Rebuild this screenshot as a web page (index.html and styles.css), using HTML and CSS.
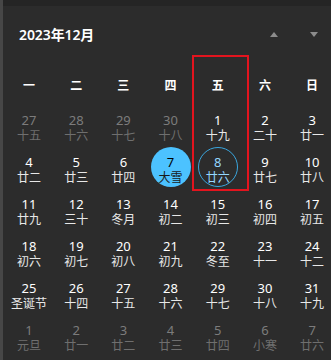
FILE: index.html
```html
<!DOCTYPE html>
<html lang="zh-CN">
<head>
<meta charset="utf-8">
<title>日历</title>
<link rel="stylesheet" href="styles.css">
</head>
<body>
<div class="frame">
  <div class="topband"></div>
  <div class="header">
    <div class="title">2023年12月</div>
    <div class="nav">
      <svg class="arrow" width="8" height="5" viewBox="0 0 8 5"><polygon points="4,0 8,5 0,5"/></svg>
      <svg class="arrow" width="8" height="5" viewBox="0 0 8 5"><polygon points="0,0 8,0 4,5"/></svg>
    </div>
  </div>
  <div class="grid weekdays">
    <div class="wd">一</div><div class="wd">二</div><div class="wd">三</div><div class="wd">四</div><div class="wd">五</div><div class="wd">六</div><div class="wd">日</div>
  </div>
  <div class="grid days">
    <div class="cell"><div class="day other"><span class="num">27</span><span class="lunar">十五</span></div></div>
    <div class="cell"><div class="day other"><span class="num">28</span><span class="lunar">十六</span></div></div>
    <div class="cell"><div class="day other"><span class="num">29</span><span class="lunar">十七</span></div></div>
    <div class="cell"><div class="day other"><span class="num">30</span><span class="lunar">十八</span></div></div>
    <div class="cell"><div class="day"><span class="num">1</span><span class="lunar">十九</span></div></div>
    <div class="cell"><div class="day"><span class="num">2</span><span class="lunar">二十</span></div></div>
    <div class="cell"><div class="day"><span class="num">3</span><span class="lunar">廿一</span></div></div>

    <div class="cell"><div class="day"><span class="num">4</span><span class="lunar">廿二</span></div></div>
    <div class="cell"><div class="day"><span class="num">5</span><span class="lunar">廿三</span></div></div>
    <div class="cell"><div class="day"><span class="num">6</span><span class="lunar">廿四</span></div></div>
    <div class="cell"><div class="day selected"><span class="num">7</span><span class="lunar">大雪</span></div></div>
    <div class="cell"><div class="day today"><span class="num">8</span><span class="lunar">廿六</span></div></div>
    <div class="cell"><div class="day"><span class="num">9</span><span class="lunar">廿七</span></div></div>
    <div class="cell"><div class="day"><span class="num">10</span><span class="lunar">廿八</span></div></div>

    <div class="cell"><div class="day"><span class="num">11</span><span class="lunar">廿九</span></div></div>
    <div class="cell"><div class="day"><span class="num">12</span><span class="lunar">三十</span></div></div>
    <div class="cell"><div class="day"><span class="num">13</span><span class="lunar">冬月</span></div></div>
    <div class="cell"><div class="day"><span class="num">14</span><span class="lunar">初二</span></div></div>
    <div class="cell"><div class="day"><span class="num">15</span><span class="lunar">初三</span></div></div>
    <div class="cell"><div class="day"><span class="num">16</span><span class="lunar">初四</span></div></div>
    <div class="cell"><div class="day"><span class="num">17</span><span class="lunar">初五</span></div></div>

    <div class="cell"><div class="day"><span class="num">18</span><span class="lunar">初六</span></div></div>
    <div class="cell"><div class="day"><span class="num">19</span><span class="lunar">初七</span></div></div>
    <div class="cell"><div class="day"><span class="num">20</span><span class="lunar">初八</span></div></div>
    <div class="cell"><div class="day"><span class="num">21</span><span class="lunar">初九</span></div></div>
    <div class="cell"><div class="day"><span class="num">22</span><span class="lunar">冬至</span></div></div>
    <div class="cell"><div class="day"><span class="num">23</span><span class="lunar">十一</span></div></div>
    <div class="cell"><div class="day"><span class="num">24</span><span class="lunar">十二</span></div></div>

    <div class="cell"><div class="day"><span class="num">25</span><span class="lunar">圣诞节</span></div></div>
    <div class="cell"><div class="day"><span class="num">26</span><span class="lunar">十四</span></div></div>
    <div class="cell"><div class="day"><span class="num">27</span><span class="lunar">十五</span></div></div>
    <div class="cell"><div class="day"><span class="num">28</span><span class="lunar">十六</span></div></div>
    <div class="cell"><div class="day"><span class="num">29</span><span class="lunar">十七</span></div></div>
    <div class="cell"><div class="day"><span class="num">30</span><span class="lunar">十八</span></div></div>
    <div class="cell"><div class="day"><span class="num">31</span><span class="lunar">十九</span></div></div>

    <div class="cell"><div class="day other"><span class="num">1</span><span class="lunar">元旦</span></div></div>
    <div class="cell"><div class="day other"><span class="num">2</span><span class="lunar">廿一</span></div></div>
    <div class="cell"><div class="day other"><span class="num">3</span><span class="lunar">廿二</span></div></div>
    <div class="cell"><div class="day other"><span class="num">4</span><span class="lunar">廿三</span></div></div>
    <div class="cell"><div class="day other"><span class="num">5</span><span class="lunar">廿四</span></div></div>
    <div class="cell"><div class="day other"><span class="num">6</span><span class="lunar">小寒</span></div></div>
    <div class="cell"><div class="day other"><span class="num">7</span><span class="lunar">廿六</span></div></div>
  </div>
  <div class="highlight"></div>
</div>
</body>
</html>
```

FILE: styles.css
```css
html, body {
  margin: 0;
  padding: 0;
  overflow: hidden;
  background: #2c2c2c;
}

body {
  width: 331px;
  height: 360px;
  font-family: "Noto Sans", "Noto Sans CJK SC", sans-serif;
  color: #ffffff;
}

.frame {
  position: relative;
  height: 360px;
  border-left: 3px solid #474747;
  background: #2c2c2c;
}

.topband {
  height: 6px;
  background: #252525;
}

.header {
  display: flex;
  align-items: center;
  justify-content: space-between;
  height: 40px;
  margin-top: 8px;
  padding-left: 16px;
  padding-right: 13px;
}

.title {
  font-size: 14px;
  font-weight: 600;
  letter-spacing: -0.1px;
}

.nav {
  display: flex;
  align-items: center;
  gap: 32px;
}

.arrow {
  display: block;
  fill: #8c8c8c;
}

.grid {
  display: grid;
  grid-template-columns: repeat(7, 47.2px);
  margin-left: 2.4px;
}

.weekdays {
  height: 40px;
  margin-top: 11px;
  align-items: center;
}

.wd {
  text-align: center;
  font-family: "Noto Sans CJK SC", sans-serif;
  font-size: 12px;
  font-weight: 700;
  line-height: 14px;
}

.days {
  margin-top: -1px;
  grid-auto-rows: 42px;
}

.cell {
  display: flex;
  align-items: center;
  justify-content: center;
}

.day {
  width: 40px;
  height: 40px;
  box-sizing: border-box;
  border-radius: 50%;
  display: flex;
  flex-direction: column;
  align-items: center;
  justify-content: center;
  padding-top: 3px;
}

.num {
  font-size: 13px;
  line-height: 16px;
  color: #ffffff;
}

.lunar {
  font-family: "Noto Sans CJK SC", sans-serif;
  font-size: 12px;
  line-height: 14px;
  color: #e8e8e8;
  white-space: nowrap;
}

.other .num {
  color: #7c7c7c;
}

.other .lunar {
  color: #6f6f6f;
}

.selected {
  background: #4cc2ff;
}

.selected .num {
  color: #000000;
}

.selected .lunar {
  color: #1a1a1a;
}

.today {
  border: 1px solid #3aa6de;
}

.today .num,
.today .lunar {
  color: #94d7ff;
}

.highlight {
  position: absolute;
  left: 189px;
  top: 55px;
  width: 57px;
  height: 136px;
  box-sizing: border-box;
  border: 2px solid #e3141e;
  pointer-events: none;
}
```
